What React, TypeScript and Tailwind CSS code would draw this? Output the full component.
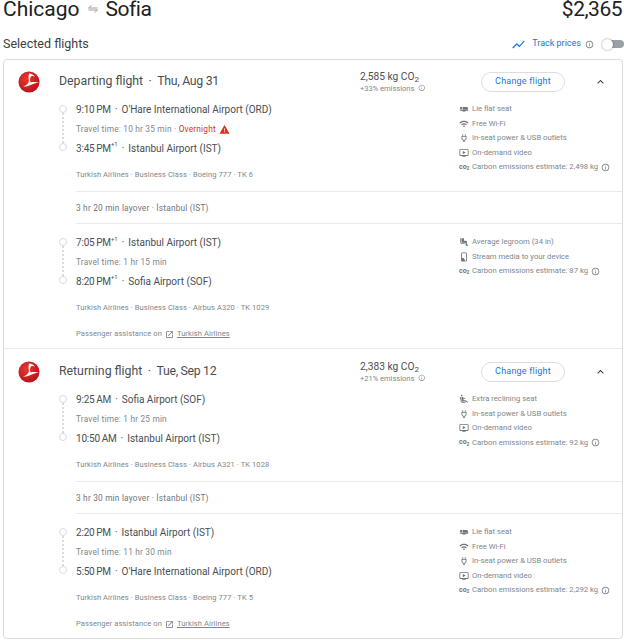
import { ReactNode } from "react"

const ICONS: Record<string, string> = {
  flat: "M22 11v2H9V7h9c2.21 0 4 1.79 4 4zM2 14v2h6v2h8v-2h6v-2H2zm5.14-1.9c1.16-1.19 1.14-3.08-.04-4.24-1.19-1.16-3.08-1.14-4.24.04-1.16 1.19-1.14 3.08.04 4.24 1.19 1.16 3.08 1.14 4.24-.04z",
  wifi: "M1 9l2 2c4.97-4.97 13.03-4.97 18 0l2-2C16.93 2.93 7.08 2.93 1 9zm8 8l3 3 3-3c-1.65-1.66-4.34-1.66-6 0zm-4-4l2 2c2.76-2.76 7.24-2.76 10 0l2-2C15.14 9.14 8.87 9.14 5 13z",
  power: "M16 7V3h-2v4h-4V3H8v4H6v7.5L9.5 18v3h5v-3l3.5-3.51V7h-2zm0 6.66l-3.5 3.51V19h-1v-1.83L8 13.65V9h8v4.66z",
  video: "M21 3H3c-1.11 0-2 .89-2 2v12c0 1.1.89 2 2 2h5v2h8v-2h5c1.1 0 1.99-.9 1.99-2L23 5c0-1.11-.9-2-2-2zm0 14H3V5h18v12zm-5-6l-7 4V7z",
  legroom: "M5 12V3H3v9c0 2.76 2.24 5 5 5h6v-2H8c-1.66 0-3-1.34-3-3zm15.5 6H19v-7c0-1.1-.9-2-2-2h-5V3H6v8c0 1.65 1.35 3 3 3h7v7h4.5c.83 0 1.5-.67 1.5-1.5s-.67-1.5-1.5-1.5z",
  recline: "M5.35 5.64c-.9-.64-1.12-1.88-.49-2.79.63-.9 1.88-1.12 2.79-.49.9.64 1.12 1.88.49 2.79-.64.9-1.88 1.12-2.79.49zM16 19H8.93c-1.48 0-2.74-1.08-2.96-2.54L4 7H2l1.99 9.76C4.37 19.2 6.47 21 8.94 21H16v-2zm.23-4h-4.88l-1.03-4.1c1.58.89 3.28 1.54 5.15 1.22V9.99c-1.63.31-3.44-.27-4.69-1.25L9.14 7.47c-.23-.18-.49-.3-.76-.38-.32-.09-.66-.12-.99-.06h-.02c-1.23.22-2.05 1.39-1.84 2.61l1.35 5.92C7.16 16.98 8.39 18 9.83 18h6.85l3.82 3 1.5-1.5-5.77-4.5z",
  stream: "M17 1H7C5.9 1 5 1.9 5 3v18c0 1.1.9 2 2 2h10c1.1 0 2-.9 2-2V3c0-1.1-.9-2-2-2zm0 20h-3v-1c0-3.3-2.7-6-6-6H7V3h10v18zM7 16v1.5c2 0 3.5 1.5 3.5 3.5H12c0-2.8-2.2-5-5-5zm0 3v2h2c0-1.1-.9-2-2-2z",
  info: "M11 7h2v2h-2zm0 4h2v6h-2zm1-9C6.48 2 2 6.48 2 12s4.48 10 10 10 10-4.48 10-10S17.52 2 12 2zm0 18c-4.41 0-8-3.59-8-8s3.59-8 8-8 8 3.59 8 8-3.59 8-8 8z",
  open: "M19 19H5V5h7V3H5c-1.11 0-2 .9-2 2v14c0 1.1.89 2 2 2h14c1.1 0 2-.9 2-2v-7h-2v7zM14 3v2h3.59l-9.83 9.83 1.41 1.41L19 6.41V10h2V3h-7z",
  warning: "M1 21h22L12 2 1 21zm12-3h-2v-2h2v2zm0-4h-2v-4h2v4z",
  less: "M12 8l-6 6 1.41 1.41L12 10.83l4.59 4.58L18 14z",
  chart: "M3.5 18.49l6-6.01 4 4L22 6.92l-1.41-1.41-7.09 7.97-4-4L2 16.99z",
}

function Icon({ name, className }: { name: string; className: string }) {
  return (
    <svg viewBox="0 0 24 24" className={className} fill="currentColor">
      <path d={ICONS[name]} />
    </svg>
  )
}

function Logo() {
  return (
    <svg viewBox="0 0 24 24" className="w-[22px] h-[22px] shrink-0">
      <defs>
        <radialGradient id="tk" cx="40%" cy="35%" r="70%">
          <stop offset="0%" stopColor="#e8382f" />
          <stop offset="100%" stopColor="#b5121b" />
        </radialGradient>
      </defs>
      <circle cx="12" cy="12" r="11.5" fill="url(#tk)" />
      <path
        d="M12 2.6c3 .2 5.2 1.6 6.6 3.6-1.8-.9-3.4-1-4.4-.3-1.3.9-1.3 3.4-.6 6.6 3-.6 6.2-.6 9.2.2-3.4.2-6.6 1.2-9.4 2.6-2.6 1.3-5.2 1.9-8 1.7 3.4-1 5.8-3 6.6-6-.5-3.2-.6-6.2.0-8.4z"
        fill="#fff"
      />
    </svg>
  )
}

type Feature = { icon: string; text: string; info?: boolean }

function FeatureRow({ icon, text, info }: Feature) {
  return (
    <div className="flex items-center h-[14.5px] text-[7.7px] text-[#80868b] whitespace-nowrap">
      <div className="w-[14px] flex justify-start pl-[1px] shrink-0 text-[#70757a]">
        {icon === "co2" ? (
          <span className="text-[7px] font-bold leading-none">
            co<sub className="text-[5px] leading-none align-baseline">2</sub>
          </span>
        ) : (
          <Icon name={icon} className="w-[10px] h-[10px]" />
        )}
      </div>
      <span>{text}</span>
      {info && <Icon name="info" className="w-[9px] h-[9px] ml-[3px] text-[#70757a]" />}
    </div>
  )
}

function Dot() {
  return <div className="w-[8px] h-[8px] rounded-full border border-[#dadce0] bg-white shrink-0" />
}

type Leg = {
  dep: string
  depPlus?: boolean
  from: string
  travel: ReactNode
  arr: string
  arrPlus?: boolean
  to: string
  info: string
  features: Feature[]
}

function Time({ time, plus, place }: { time: string; plus?: boolean; place: string }) {
  return (
    <div className="h-[19.5px] flex items-center text-[10px] text-[#4a4e52] whitespace-nowrap">
      <span className="tracking-[-0.2px] [word-spacing:-0.5px]">{time}</span>
      {plus && <sup className="text-[6px] leading-none -mt-[2px]">+1</sup>}
      <span className="mx-[4px]">·</span>
      {place}
    </div>
  )
}

function Segment({ leg }: { leg: Leg }) {
  return (
    <div className="flex">
      <div className="w-[72px] flex flex-col items-end pr-[9px] pt-[5px] shrink-0">
        <div className="flex flex-col items-center w-[8px]">
          <Dot />
          <div className="h-[30px] border-l-2 border-dotted border-[#dadce0]" />
          <Dot />
        </div>
      </div>
      <div className="w-[382px] shrink-0">
        <Time time={leg.dep} plus={leg.depPlus} place={leg.from} />
        <div className="h-[19px] flex items-center text-[8.3px] tracking-[0.2px] text-[#80868b]">{leg.travel}</div>
        <Time time={leg.arr} plus={leg.arrPlus} place={leg.to} />
        <div className="mt-[9px] h-[16px] flex items-center text-[7.5px] tracking-[0.1px] text-[#80868b]">{leg.info}</div>
      </div>
      <div className="pt-[2px]">
        {leg.features.map((f) => (
          <FeatureRow key={f.text} {...f} />
        ))}
      </div>
    </div>
  )
}

function Layover({ text }: { text: string }) {
  return (
    <div className="ml-[72px] mt-[8px] mb-[9px] h-[33px] pt-[1px] border-y border-[#e8eaed] flex items-center text-[8.3px] tracking-[0.2px] text-[#70757a]">
      {text}
    </div>
  )
}

function Assistance() {
  return (
    <div className="ml-[72px] mt-[12px] h-[12px] flex items-center text-[7.5px] tracking-[0.1px] text-[#80868b]">
      Passenger assistance on
      <Icon name="open" className="w-[9px] h-[9px] mx-[3px] text-[#70757a]" />
      <span className="underline">Turkish Airlines</span>
    </div>
  )
}

function FlightHeader({ title, date, co2, emissions }: { title: string; date: string; co2: string; emissions: string }) {
  return (
    <div className="flex items-center h-[35px] pl-[14px] pr-[15px]">
      <Logo />
      <div className="w-[320px] pl-[19px] shrink-0 text-[12.3px] text-[#4a4e52] whitespace-nowrap">
        {title}
        <span className="mx-[5.5px]">·</span>
        <span className="tracking-[-0.3px]">{date}</span>
      </div>
      <div className="w-[121px] shrink-0">
        <div className="text-[10.2px] leading-[13px] text-[#4a4e52] whitespace-nowrap">
          {co2} kg CO<sub className="text-[8px] leading-none">2</sub>
        </div>
        <div className="flex items-center text-[7.5px] leading-[11px] text-[#80868b]">
          {emissions} emissions
          <Icon name="info" className="w-[7.5px] h-[7.5px] ml-[4px]" />
        </div>
      </div>
      <button className="w-[84px] h-[20px] rounded-full border border-[#dadce0] text-[9px] tracking-[0.2px] text-[#1a73e8] shrink-0">
        Change flight
      </button>
      <Icon name="less" className="w-[14px] h-[14px] ml-[29px] text-[#3c4043]" />
    </div>
  )
}

const flat: Feature = { icon: "flat", text: "Lie flat seat" }
const wifi: Feature = { icon: "wifi", text: "Free Wi-Fi" }
const power: Feature = { icon: "power", text: "In-seat power & USB outlets" }
const video: Feature = { icon: "video", text: "On-demand video" }
const carbon = (kg: string): Feature => ({ icon: "co2", text: `Carbon emissions estimate: ${kg} kg`, info: true })

const legs: Record<string, Leg> = {
  ordIst: {
    dep: "9:10 PM",
    from: "O'Hare International Airport (ORD)",
    travel: (
      <>
        Travel time: 10 hr 35 min ·&nbsp;<span className="text-[#d93025]">Overnight</span>
        <Icon name="warning" className="w-[11px] h-[11px] ml-[3px] text-[#d93025]" />
      </>
    ),
    arr: "3:45 PM",
    arrPlus: true,
    to: "Istanbul Airport (IST)",
    info: "Turkish Airlines · Business Class · Boeing 777 · TK 6",
    features: [flat, wifi, power, video, carbon("2,498")],
  },
  istSof: {
    dep: "7:05 PM",
    depPlus: true,
    from: "Istanbul Airport (IST)",
    travel: "Travel time: 1 hr 15 min",
    arr: "8:20 PM",
    arrPlus: true,
    to: "Sofia Airport (SOF)",
    info: "Turkish Airlines · Business Class · Airbus A320 · TK 1029",
    features: [
      { icon: "legroom", text: "Average legroom (34 in)" },
      { icon: "stream", text: "Stream media to your device" },
      carbon("87"),
    ],
  },
  sofIst: {
    dep: "9:25 AM",
    from: "Sofia Airport (SOF)",
    travel: "Travel time: 1 hr 25 min",
    arr: "10:50 AM",
    to: "Istanbul Airport (IST)",
    info: "Turkish Airlines · Business Class · Airbus A321 · TK 1028",
    features: [{ icon: "recline", text: "Extra reclining seat" }, power, video, carbon("92")],
  },
  istOrd: {
    dep: "2:20 PM",
    from: "Istanbul Airport (IST)",
    travel: "Travel time: 11 hr 30 min",
    arr: "5:50 PM",
    to: "O'Hare International Airport (ORD)",
    info: "Turkish Airlines · Business Class · Boeing 777 · TK 5",
    features: [flat, wifi, power, video, carbon("2,292")],
  },
}

function App() {
  return (
    <div className="w-[624px] h-[640px] overflow-hidden bg-white font-['Roboto',sans-serif]">
      <div className="flex justify-between items-center h-[24px] -mt-[3px] pl-[3px] pr-[2px] text-[21px] leading-[24px] text-[#202124]">
        <div className="flex items-center">
          Chicago
          <svg viewBox="0 0 24 24" className="w-[12px] h-[12px] mx-[7px] text-[#9aa0a6]" fill="none" stroke="currentColor" strokeWidth="2">
            <path d="M9 5l-6 5h18M15 19l6-5H3" />
          </svg>
          <span className="tracking-[-0.5px]">Sofia</span>
        </div>
        <div className="tracking-[-0.5px]">$2,365</div>
      </div>

      <div className="flex justify-between items-center mt-[13px] h-[20px] pl-[3px]">
        <div className="text-[12.5px] text-[#3c4043]">Selected flights</div>
        <div className="flex items-center">
          <Icon name="chart" className="w-[15px] h-[15px] text-[#1a73e8]" />
          <span className="ml-[6px] text-[9px] text-[#1a73e8]">Track prices</span>
          <Icon name="info" className="w-[9px] h-[9px] ml-[4px] text-[#70757a]" />
          <div className="relative ml-[8px] w-[22px] h-[11px]">
            <div className="absolute right-0 top-[1.5px] w-[17px] h-[8px] rounded-full bg-[#9aa0a6]" />
            <div className="absolute left-0 top-0 w-[11px] h-[11px] rounded-full bg-white shadow-[0_0_2px_rgba(0,0,0,0.5)]" />
          </div>
        </div>
      </div>

      <div className="mt-[5px] ml-[3px] w-[620px] h-[580px] rounded-[4px] border border-[#dadce0]">
        <div className="h-[289px] border-b border-[#e8eaed] pt-[4px]">
          <FlightHeader title="Departing flight" date="Thu, Aug 31" co2="2,585" emissions="+33%" />
          <div className="mt-[1px]" />
          <Segment leg={legs.ordIst} />
          <Layover text="3 hr 20 min layover · İstanbul (IST)" />
          <Segment leg={legs.istSof} />
          <Assistance />
        </div>
        <div className="pt-[5px]">
          <FlightHeader title="Returning flight" date="Tue, Sep 12" co2="2,383" emissions="+21%" />
          <div className="mt-[1px]" />
          <Segment leg={legs.sofIst} />
          <Layover text="3 hr 30 min layover · İstanbul (IST)" />
          <Segment leg={legs.istOrd} />
          <Assistance />
        </div>
      </div>
    </div>
  )
}

export default App
